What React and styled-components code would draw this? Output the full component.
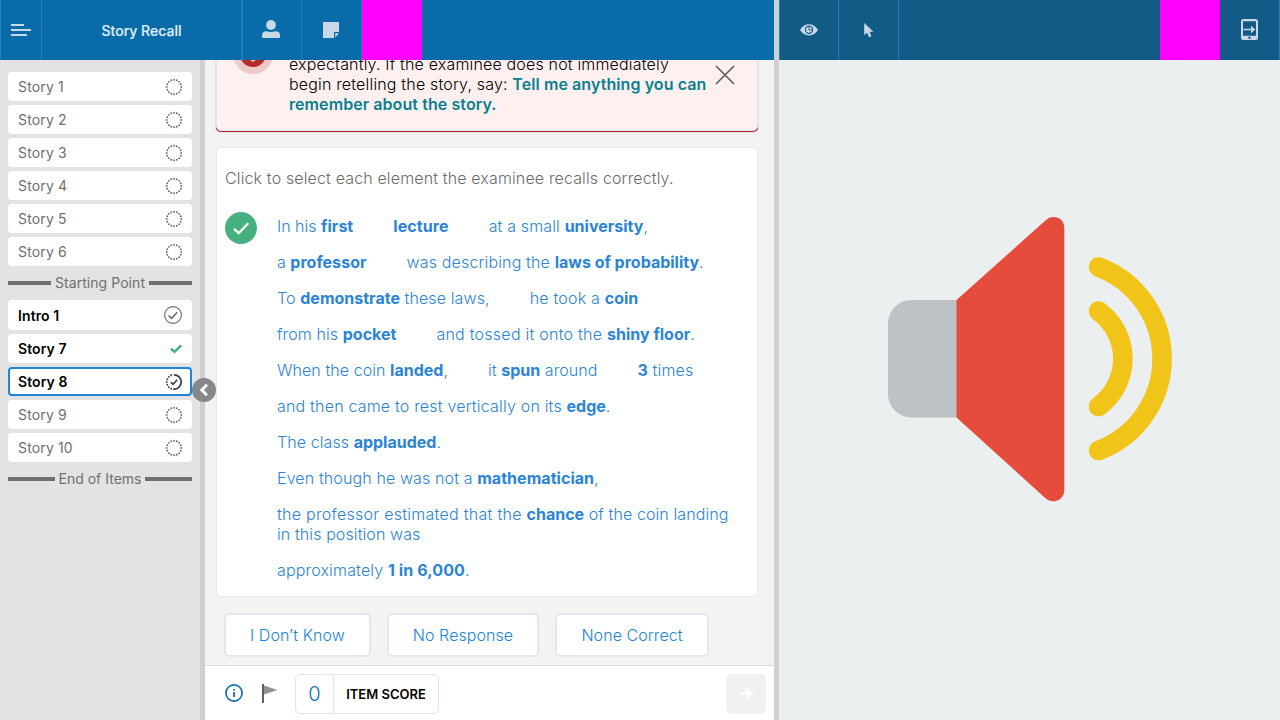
import React from "react";
import styled, { createGlobalStyle, css } from "styled-components";

const Global = createGlobalStyle`
  * { box-sizing: border-box; }
  body { margin: 0; font-family: Inter, "Liberation Sans", sans-serif; }
  button { font: inherit; margin: 0; padding: 0; }
  svg { display: block; flex: none; }
`;

const Page = styled.div`
  display: flex;
  width: 1280px;
  height: 720px;
  overflow: hidden;
  background: #ebeff0;
`;
const Left = styled.div`
  width: 774px;
  display: flex;
  flex-direction: column;
`;
const Right = styled.div`
  flex: 1;
  display: flex;
  flex-direction: column;
`;
const Divider = styled.div`
  flex: none;
  width: 5px;
  background: #d0d0d0;
`;
const Header = styled.header`
  flex: none;
  height: 60px;
  display: flex;
  background: ${(p) => (p.$dark ? "#125b86" : "#096ca9")};
`;
const HeaderCell = styled.div`
  width: ${(p) => p.$w}px;
  display: flex;
  align-items: center;
  justify-content: center;
  border-left: 1px solid #2080bd;
  color: #c9d8e6;
  padding-right: ${(p) => p.$pr || 0}px;
  padding-bottom: ${(p) => p.$pb || 0}px;
  ${(p) => p.$last && css`
    border-left: 0;
    border-right: 1px solid #2080bd;
  `}
`;
const Title = styled(HeaderCell)`
  border-right: 1px solid #2080bd;
  color: #dfeaf3;
  font-size: 14px;
  font-weight: 500;
  padding: 1px 0 0 0;
  -webkit-text-stroke: 0.2px #dfeaf3;
`;
const Block = styled.div`
  width: 60px;
  box-sizing: content-box;
  background: #ff00ff;
  border-left: ${(p) => (p.$push ? 0 : 1)}px solid #2080bd;
  margin-left: ${(p) => (p.$push ? "auto" : 0)};
`;
const LeftBody = styled.div`
  flex: 1;
  min-height: 0;
  display: flex;
`;
const Sidebar = styled.nav`
  position: relative;
  width: 200px;
  padding: 12px 8px;
  display: flex;
  flex-direction: column;
  gap: 4px;
  background: #e3e3e3;
`;
const Item = styled.div`
  flex: none;
  height: ${(p) => (p.$tall ? 30 : 29)}px;
  display: flex;
  align-items: center;
  justify-content: space-between;
  padding: 0 ${(p) => (p.$tall || p.$done ? 10 : 9)}px 0 10px;
  border-radius: 4px;
  background: #fff;
  font-size: 14px;
  line-height: 17px;
  letter-spacing: 0.15px;
  color: #6f6f6f;
  ${(p) => p.$bold && css`
    color: #000;
    font-weight: 600;
    letter-spacing: 0.1px;
  `}
  ${(p) => p.$active && css`
    border: 2px solid #2185d5;
    padding: 0 7px 0 8px;
  `}
`;
const Separator = styled.div`
  flex: none;
  height: 26px;
  display: flex;
  align-items: center;
  gap: 4px;
  font-size: 14px;
  line-height: 16px;
  letter-spacing: ${(p) => p.$track || 0}px;
  color: #6f7072;
  span { margin-top: -1px; }
  &::before, &::after {
    content: "";
    flex: 1;
    height: 4px;
    background: #6f7072;
  }
`;
const Collapse = styled.button`
  position: absolute;
  z-index: 2;
  left: 192px;
  top: 318px;
  width: 24px;
  height: 24px;
  border: 0;
  border-radius: 50%;
  background: #868889;
  display: grid;
  place-items: center;
`;
const Main = styled.main`
  flex: 1;
  display: flex;
  flex-direction: column;
  background: #f3f3f3;
`;
const Scroll = styled.div`
  flex: 1;
  min-height: 0;
  overflow: hidden;
  display: flex;
  flex-direction: column;
  justify-content: flex-end;
  padding: 0 16px 8px 11px;
`;
const Alert = styled.section`
  flex: none;
  width: 542px;
  height: 119px;
  display: flex;
  align-items: flex-end;
  padding: 0 20px 16px 16px;
  background: #fff0f0;
  border: 1px solid #e4e7f1;
  border-radius: 5px;
  box-shadow: 0 1px 0 #b0282e, 0 1px 1px #b0282e;
`;
const AlertBadge = styled.div`
  width: 40px;
  height: 40px;
  margin-bottom: 40px;
  border: 7px solid #efc9c9;
  border-radius: 50%;
  background: #b52b2b;
  display: flex;
  align-items: flex-end;
  justify-content: center;
  padding-bottom: 5px;
`;
const AlertText = styled.p`
  margin: 0 0 0 16px;
  width: 420px;
  font-size: 16px;
  line-height: 20px;
  font-weight: 300;
  letter-spacing: 0.17px;
  color: #000;
  b { font-weight: 600; color: #08808f; letter-spacing: 0.08px; }
`;
const AlertClose = styled.div`
  margin: 0 0 29px 6px;
`;
const Card = styled.section`
  flex: none;
  width: 542px;
  height: 450px;
  margin-top: 16px;
  padding: 19px 8px 0;
  background: #fff;
  border: 1px solid #e4e7f1;
  border-radius: 5px;
`;
const Prompt = styled.p`
  margin: 0;
  font-size: 16px;
  line-height: 22px;
  font-weight: 300;
  letter-spacing: 0.14px;
  color: #6b6b6b;
`;
const StoryArea = styled.div`
  display: flex;
  gap: 20px;
  margin-top: 23px;
`;
const CheckBadge = styled.div`
  flex: none;
  width: 32px;
  height: 32px;
  border-radius: 50%;
  background: #46b081;
  display: grid;
  place-items: center;
`;
const Lines = styled.div`
  display: flex;
  flex-direction: column;
  gap: 16px;
  width: 456px;
  padding-top: 4px;
`;
const Line = styled.div`
  display: flex;
  gap: 40px;
  font-size: 16px;
  line-height: 20px;
  font-weight: 300;
  color: #2b84d4;
`;
const Phrase = styled.span`
  letter-spacing: ${(p) => p.$track}px;
  b { font-weight: 700; letter-spacing: ${(p) => p.$boldTrack || 0}px; }
`;
const Tail = styled.span`
  letter-spacing: 0.1px;
`;
const Answers = styled.div`
  flex: none;
  display: flex;
  gap: 16px;
  margin: 16px 0 0 8px;
`;
const Answer = styled.button`
  width: ${(p) => p.$w}px;
  height: 44px;
  border: 2px solid #e2e7f2;
  border-radius: 5px;
  background: #fff;
  color: #2185d5;
  font-size: 16px;
  font-weight: 300;
  letter-spacing: 0.07px;
`;
const Footer = styled.footer`
  flex: none;
  height: 55px;
  display: flex;
  align-items: center;
  padding: 1px 8px 0 20px;
  border-top: 1px solid #dcdddf;
  background: #fff;
`;
const InfoBox = styled.div`
  padding-bottom: 2px;
`;
const FlagBox = styled.div`
  margin: 0 17px 0 19px;
  padding-bottom: 1px;
`;
const Score = styled.div`
  display: flex;
  width: 144px;
  height: 40px;
  border: 1px solid #e2e5f0;
  border-radius: 5px;
  overflow: hidden;
`;
const ScoreValue = styled.div`
  width: 38px;
  border-right: 1px solid #e2e5f0;
  text-align: center;
  font-size: 20px;
  line-height: 38px;
  font-weight: 300;
  color: #0f6fae;
`;
const ScoreLabel = styled.div`
  flex: 1;
  text-align: center;
  font-size: 13px;
  line-height: 39px;
  font-weight: 600;
  color: #000;
`;
const Next = styled.button`
  width: 40px;
  height: 40px;
  margin-left: auto;
  border: 0;
  border-radius: 5px;
  background: #f1f1f1;
  display: grid;
  place-items: center;
`;
const Stage = styled.div`
  flex: 1;
  padding: 157px 0 0 109px;
  background: #ebeff0;
`;

const dots = Array.from({ length: 16 }, (_, i) => {
  const a = (i * Math.PI) / 8;
  return [8 + 7.3 * Math.sin(a), 8 - 7.3 * Math.cos(a)];
});

const Pending = () => (
  <svg width="18" height="18" viewBox="-1 -1 18 18" fill="#6b6b6b">
    {dots.map(([x, y], i) => <circle key={i} cx={x} cy={y} r="0.95" />)}
  </svg>
);
const Partial = () => (
  <svg width="18" height="18" viewBox="-1 -1 18 18" fill="#3f3f3f">
    {dots.slice(8).map(([x, y], i) => <circle key={i} cx={x} cy={y} r="0.95" />)}
    <path d="M8 0.8A7.2 7.2 0 0 1 8 15.2" fill="none" stroke="#3f3f3f" strokeWidth="1.8" />
    <path d="M4.9 8.3 7.1 10.4 11.2 5.8" fill="none" stroke="#3f3f3f" strokeWidth="1.6" />
  </svg>
);
const Visited = () => (
  <svg width="18" height="18" viewBox="0 0 18 18" fill="none" stroke="#6b6b6b">
    <circle cx="9" cy="9" r="8.4" strokeWidth="1.1" />
    <path d="M4.6 9.7 7.7 12.4 13.2 6.2" strokeWidth="1.6" />
  </svg>
);
const Done = () => (
  <svg width="12" height="10" viewBox="0 0 12 10" fill="none" stroke="#46b081" strokeWidth="2.4">
    <path d="M0.9 4.6 4.5 7.9 11.2 1.4" />
  </svg>
);
const Menu = () => (
  <svg width="20" height="12" viewBox="0 0 20 12" fill="#c9d8e6">
    <path d="M0 0H13V2H0ZM0 5H20V7H0ZM0 10H16V12H0Z" />
  </svg>
);
const Person = () => (
  <svg width="18" height="18" viewBox="0 0 18 18" fill="currentColor">
    <ellipse cx="9" cy="5" rx="4.9" ry="5" />
    <path d="M0 17V15.5Q0 11.3 4.5 11.3Q9 12.6 13.5 11.3Q18 11.3 18 15.5V17Q18 18 17 18H1Q0 18 0 17Z" />
  </svg>
);
const Note = () => (
  <svg width="16" height="16" viewBox="0 0 16 16" fill="currentColor">
    <path d="M.5 0H15.5Q16 0 16 .5V10H11.5Q11 10 11 10.5V16H.5Q0 16 0 15.5V.5Q0 0 .5 0Z" />
    <path d="M12.2 11.2H16L12.2 15.5Z" />
  </svg>
);
const Eye = () => (
  <svg width="18" height="12" viewBox="0 0 18 12">
    <path d="M0 6C2.2 2.2 5.2.2 9 .2S15.8 2.2 18 6C15.8 9.6 12.8 11.4 9 11.4S2.2 9.6 0 6Z" fill="currentColor" />
    <circle cx="9" cy="5.8" r="3.6" fill="#c9d8e6" stroke="#125b86" strokeWidth="1.2" />
    <path d="M9 2.8V6H12" fill="none" stroke="#125b86" strokeWidth="0.9" />
  </svg>
);
const Pointer = () => (
  <svg width="10" height="15" viewBox="0 0 10 15" fill="currentColor">
    <path d="M.2 0 9.4 8.8H5.7L7.4 13.2 5 14.2 3.1 9.8.2 12.2Z" />
  </svg>
);
const Tablet = () => (
  <svg width="17" height="21" viewBox="0 0 17 21">
    <path fillRule="evenodd" d="M2.5 0H14.5Q17 0 17 2.5V18.5Q17 21 14.5 21H2.5Q0 21 0 18.5V2.5Q0 0 2.5 0ZM2 2.3V16.7H15V2.3Z" fill="currentColor" />
    <path d="M2.4 9.8H10V6.7L14.4 10.5 10 14.3V11.3H2.4Z" fill="currentColor" />
    <circle cx="8.5" cy="18.7" r="1.2" fill="#125b86" />
  </svg>
);
const Chevron = () => (
  <svg width="9" height="14" viewBox="0 0 9 14" fill="none" stroke="#fff" strokeWidth="2.8">
    <path d="M7 1.7 1.8 7 7 12.3" />
  </svg>
);
const Cross = () => (
  <svg width="20" height="20" viewBox="0 0 20 20" stroke="#5f6062" strokeWidth="1.7">
    <path d="M1 1 19 19M19 1 1 19" />
  </svg>
);
const Tick = () => (
  <svg width="18" height="14" viewBox="0 0 18 14" fill="none" stroke="#fff" strokeWidth="2.3">
    <path d="M2 7.8 6.7 12.2 16.2 2.3" />
  </svg>
);
const BadgeMark = () => (
  <svg width="6" height="6" viewBox="0 0 6 6" fill="#f0caca">
    <circle cx="3" cy="3" r="2.6" />
  </svg>
);
const Info = () => (
  <svg width="18" height="18" viewBox="0 0 18 18">
    <circle cx="9" cy="9" r="8.1" fill="none" stroke="#0f6fae" strokeWidth="1.7" />
    <path d="M8.1 8H9.9V13H8.1ZM8.1 5H9.9V6.6H8.1Z" fill="#0f6fae" />
  </svg>
);
const Flag = () => (
  <svg width="16" height="19" viewBox="0 0 16 19">
    <path d="M2 1.5 15.5 6 2 10.5Z" fill="#929292" />
    <path d="M0 0H2V19H0Z" fill="#606060" />
  </svg>
);
const Arrow = () => (
  <svg width="13" height="13" viewBox="0 0 13 13" fill="none" stroke="#fff" strokeWidth="2.3">
    <path d="M0 6.5H11.5M5.800 1 11.300 6.500 5.800 12" />
  </svg>
);
const Speaker = () => (
  <svg width="284" height="285" viewBox="0 0 284 285">
    <path d="M23.5 83H69V200.500H23.500A23.500 23.500 0 0 1 0 177V106.500A23.500 23.500 0 0 1 23.500 83Z" fill="#bdc2c6" />
    <path d="M68.500 83 157.500 3.500C164 -3 176.300 0 176.300 11V273C176.300 284 164 287.500 157.500 281.300L68.500 200.500Z" fill="#e64c3c" />
    <path d="M210.500 94A59 59 0 0 1 210.500 189.500M210.500 50A98 98 0 0 1 210.500 233.500" fill="none" stroke="#f0c419" strokeWidth="19.600" strokeLinecap="round" />
  </svg>
);

const icons = { pending: Pending, partial: Partial, visited: Visited, done: Done };

const StoryItem = ({ label, state = "pending", tall, active }) => {
  const Icon = icons[state];
  return (
    <Item $bold={state !== "pending"} $done={state === "done"} $tall={tall} $active={active}>
      <span>{label}</span>
      <Icon />
    </Item>
  );
};

const story = [
  [[0, <>In his <b>first</b></>], [0, <b>lecture</b>, 0.1], [0.15, <>at a small <b>university</b>,</>]],
  [[0, <>a <b>professor</b></>, 0.05], [0.15, <>was describing the <b>laws of probability</b>.</>]],
  [[0.12, <>To <b>demonstrate</b> these laws,</>], [0.2, <>he took a <b>coin</b></>]],
  [[0.1, <>from his <b>pocket</b></>], [0.25, <>and tossed it onto the <b>shiny floor</b>.</>]],
  [[0.07, <>When the coin <b>landed</b>,</>], [0.08, <>it <b>spun</b> around</>], [0.2, <><b>3</b> times</>]],
  [[0.19, <>and then came to rest vertically on its <b>edge</b>.</>]],
  [[0.08, <>The class <b>applauded</b>.</>]],
  [[0.12, <>Even though he was not a <b>mathematician</b>,</>, 0.04]],
  [[0.28, <>the professor estimated that the <b>chance</b><Tail> of the coin landing in this position was</Tail></>]],
  [[0.16, <>approximately <b>1 in 6,000</b>.</>, 0.1]],
];

export default function App() {
  return (
    <Page>
      <Global />
      <Left>
        <Header>
          <HeaderCell $w={41}><Menu /></HeaderCell>
          <Title $w={201}>Story Recall</Title>
          <HeaderCell $w={59} $pr={2} $pb={2}><Person /></HeaderCell>
          <HeaderCell $w={60} $pr={2}><Note /></HeaderCell>
          <Block />
        </Header>
        <LeftBody>
          <Sidebar>
            {[1, 2, 3, 4, 5, 6].map((n) => <StoryItem key={n} label={`Story ${n}`} />)}
            <Separator $track={0.06}><span>Starting Point</span></Separator>
            <StoryItem label="Intro 1" state="visited" tall />
            <StoryItem label="Story 7" state="done" />
            <StoryItem label="Story 8" state="partial" active />
            <StoryItem label="Story 9" />
            <StoryItem label="Story 10" />
            <Separator><span>End of Items</span></Separator>
            <Collapse><Chevron /></Collapse>
          </Sidebar>
          <Divider />
          <Main>
            <Scroll>
              <Alert>
                <AlertBadge><BadgeMark /></AlertBadge>
                <AlertText>
                  expectantly. If the examinee does not immediately begin retelling the story, say:{" "}
                  <b>Tell me anything you can remember about the story.</b>
                </AlertText>
                <AlertClose><Cross /></AlertClose>
              </Alert>
              <Card>
                <Prompt>Click to select each element the examinee recalls correctly.</Prompt>
                <StoryArea>
                  <CheckBadge><Tick /></CheckBadge>
                  <Lines>
                    {story.map((parts, i) => (
                      <Line key={i}>
                        {parts.map(([track, text, boldTrack], j) => (
                          <Phrase key={j} $track={track} $boldTrack={boldTrack}>{text}</Phrase>
                        ))}
                      </Line>
                    ))}
                  </Lines>
                </StoryArea>
              </Card>
              <Answers>
                <Answer $w={147}>I Don’t Know</Answer>
                <Answer $w={152}>No Response</Answer>
                <Answer $w={154}>None Correct</Answer>
              </Answers>
            </Scroll>
            <Footer>
              <InfoBox><Info /></InfoBox>
              <FlagBox><Flag /></FlagBox>
              <Score>
                <ScoreValue>0</ScoreValue>
                <ScoreLabel>ITEM SCORE</ScoreLabel>
              </Score>
              <Next><Arrow /></Next>
            </Footer>
          </Main>
        </LeftBody>
      </Left>
      <Divider />
      <Right>
        <Header $dark>
          <HeaderCell $w={59}><Eye /></HeaderCell>
          <HeaderCell $w={60}><Pointer /></HeaderCell>
          <HeaderCell $w={60} />
          <Block $push />
          <HeaderCell $w={60} $last $pb={1}><Tablet /></HeaderCell>
        </Header>
        <Stage><Speaker /></Stage>
      </Right>
    </Page>
  );
}
